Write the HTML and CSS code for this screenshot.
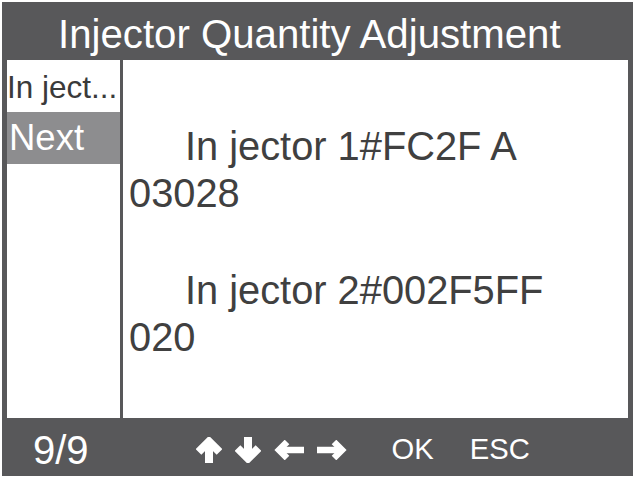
FILE: index.html
```html
<!DOCTYPE html>
<html>
<head>
<title>Injector Quantity Adjustment</title>
<link rel="stylesheet" href="styles.css">
<meta name="viewport" content="width=device-width, initial-scale=1.0">
</head>
<body>
<div class="screen">
  <div class="title">Injector Quantity Adjustment</div>
  <div class="main">
    <div class="menu">
      <div class="item">In ject...</div>
      <div class="item active">Next</div>
    </div>
    <div class="content">
      <p>In jector 1#FC2F A<br>03028</p>
      <p>In jector 2#002F5FF<br>020</p>
    </div>
  </div>
  <div class="footer">
    <span class="page">9/9</span>
    <div class="keys">
      <svg class="arrow-v" viewBox="0 0 26 26"><path d="M13 26V6"/><polyline points="2.5,15 13,4.5 23.5,15"/></svg>
      <svg class="arrow-v" viewBox="0 0 26 26"><path d="M13 0V20"/><polyline points="2.5,11 13,21.5 23.5,11"/></svg>
      <svg class="arrow-h" viewBox="0 0 30 20"><path d="M30 10H6"/><polyline points="13,2 5,10 13,18"/></svg>
      <svg class="arrow-h" viewBox="0 0 30 20"><path d="M0 10H23"/><polyline points="17,2 25,10 17,18"/></svg>
    </div>
    <span class="btn ok">OK</span>
    <span class="btn esc">ESC</span>
  </div>
</div>
</body>
</html>
```

FILE: styles.css
```css
body {
  margin: 0;
  padding: 2px;
  background: #fff;
  font-family: "Liberation Sans", Arial, sans-serif;
}
.screen {
  width: 631px;
  height: 474px;
  box-sizing: border-box;
  padding: 0 5px;
  background-color: #58585a;
  display: flex;
  flex-direction: column;
}
.title {
  height: 58px;
  box-sizing: border-box;
  padding: 7px 0 0 51px;
  line-height: 51px;
  font-size: 40.2px;
  color: #fff;
  white-space: nowrap;
}
.main {
  height: 358px;
  display: flex;
}
.menu {
  width: 116px;
  box-sizing: border-box;
  background: #fff;
  border-right: 3px solid #58585a;
}
.item {
  height: 52px;
  box-sizing: border-box;
  padding-top: 3px;
  line-height: 49px;
  font-size: 31.5px;
  color: #3a3a3a;
  white-space: nowrap;
}
.item.active {
  padding: 0 0 0 2px;
  line-height: 52px;
  font-size: 36.5px;
  color: #fff;
  background-color: #8d8d8f;
}
.content {
  flex: 1;
  background: #fff;
  padding: 63px 0 0 6px;
  font-size: 39.8px;
  line-height: 47px;
  color: #404040;
}
.content p {
  margin: 0 0 50px 0;
  text-indent: 56px;
  white-space: nowrap;
}
.footer {
  height: 58px;
  box-sizing: border-box;
  padding: 5px 0 0 26px;
  display: flex;
  align-items: center;
  color: #fff;
}
.page {
  font-size: 40px;
  line-height: 1;
}
.keys {
  display: flex;
  align-items: center;
  gap: 13px;
  margin-left: 107px;
}
.keys svg {
  fill: none;
  stroke: #fff;
  stroke-width: 8;
  stroke-linejoin: miter;
}
.arrow-v {
  width: 26px;
  height: 26px;
}
.arrow-h {
  width: 30px;
  height: 20px;
  stroke-width: 6.5 !important;
}
.btn {
  font-size: 29.2px;
  line-height: 1;
}
.ok {
  margin-left: 45px;
}
.esc {
  margin-left: 36px;
}
```
